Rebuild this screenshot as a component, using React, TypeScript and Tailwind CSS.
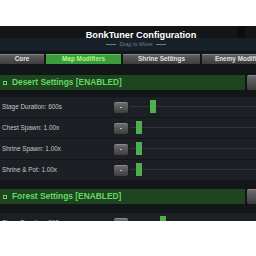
import React from "react";

interface Setting {
  label: string;
  thumb: number;
}

const desert: Setting[] = [
  { label: "Stage Duration: 600s", thumb: 20 },
  { label: "Chest Spawn: 1.00x", thumb: 6 },
  { label: "Shrine Spawn: 1.00x", thumb: 6 },
  { label: "Shrine & Pot: 1.00x", thumb: 6 },
];

const forest: Setting[] = [{ label: "Stage Duration: 900s", thumb: 30 }];

const tabs = [
  { name: "Core", w: "w-[44px]", active: false },
  { name: "Map Modifiers", w: "w-[75px]", active: true },
  { name: "Shrine Settings", w: "w-[77px]", active: false },
  { name: "Enemy Modifiers", w: "w-[77px]", active: false },
];

const SectionHeader = ({ title }: { title: string }) => (
  <div className="flex h-[15px] gap-[2px]">
    <div className="flex-1 flex items-center bg-[#1e4420] pl-[3px] gap-[5px]">
      <div className="w-[4px] h-[4px] border border-[#5fd35f]" />
      <span className="text-[8.4px] font-bold text-[#62d962] leading-none">{title}</span>
    </div>
    <div className="w-[9px] rounded-l-[2px] bg-gradient-to-b from-[#6a6a6a] to-[#3c3c3c] border-t border-[#888]" />
  </div>
);

const Row = ({ s }: { s: Setting }) => (
  <div className="flex items-center h-[20px] bg-[#1c2024]">
    <span className="w-[114px] pl-[2px] text-[6.4px] text-[#c4c6c8] leading-none">{s.label}</span>
    <div className="w-[14px] h-[11px] rounded-[2px] bg-gradient-to-b from-[#6b6b6b] to-[#3e3e3e] border-t border-[#8a8a8a] flex items-center justify-center">
      <div className="w-[2px] h-[1px] bg-[#bbb]" />
    </div>
    <div className="relative flex-1 h-full ml-[2px]">
      <div className="absolute left-0 right-0 top-[9px] h-[1px] bg-[#2f3439]" />
      <div
        className="absolute top-[3px] w-[6px] h-[13px] bg-[#4fae4f]"
        style={{ left: s.thumb }}
      />
    </div>
  </div>
);

export default function App() {
  return (
    <div className="w-[256px] h-[256px] bg-white overflow-hidden" style={{ fontFamily: '"Liberation Sans", Arial, sans-serif' }}>
      <div className="mt-[26px] h-[195px] bg-[#121619] overflow-hidden">
        <div className="relative h-[12px] flex">
          <div className="w-[282px] shrink-0 text-center text-[9.2px] font-bold text-white leading-none pt-[5px]">
            BonkTuner Configuration
          </div>
          <div className="absolute left-[237px] top-0 w-[8px] h-[12px] bg-[#0c0f11]" />
        </div>
        <div className="h-[13px] bg-[#18212a] flex">
          <div className="w-[272px] shrink-0 flex items-center justify-center gap-[3px] text-[5.5px] italic text-[#6f7f8c]">
            <div className="w-[10px] h-[1px] bg-[#6f7f8c]" />
            <span>Drag to Move</span>
            <div className="w-[10px] h-[1px] bg-[#6f7f8c]" />
          </div>
        </div>
        <div className="flex gap-[2px] mt-[3px] h-[10px]">
          {tabs.map((t) => (
            <div
              key={t.name}
              className={`${t.w} shrink-0 flex items-center justify-center text-[6.4px] font-bold leading-none ${
                t.active
                  ? "bg-[#3c9b3c] text-[#b3f58c] border-t border-[#58c058]"
                  : "bg-gradient-to-b from-[#5e5e5e] to-[#3d3d3d] text-[#e2e2e2] border-t border-[#858585]"
              }`}
            >
              <span className="whitespace-nowrap">{t.name}</span>
            </div>
          ))}
        </div>
        <div className="mt-[11px]">
          <SectionHeader title="Desert Settings [ENABLED]" />
        </div>
        <div className="mt-[7px] flex flex-col gap-[1px]">
          {desert.map((s) => (
            <Row key={s.label} s={s} />
          ))}
        </div>
        <div className="mt-[9px]">
          <SectionHeader title="Forest Settings [ENABLED]" />
        </div>
        <div className="mt-[9px] flex flex-col">
          {forest.map((s) => (
            <Row key={s.label} s={s} />
          ))}
        </div>
      </div>
    </div>
  );
}
